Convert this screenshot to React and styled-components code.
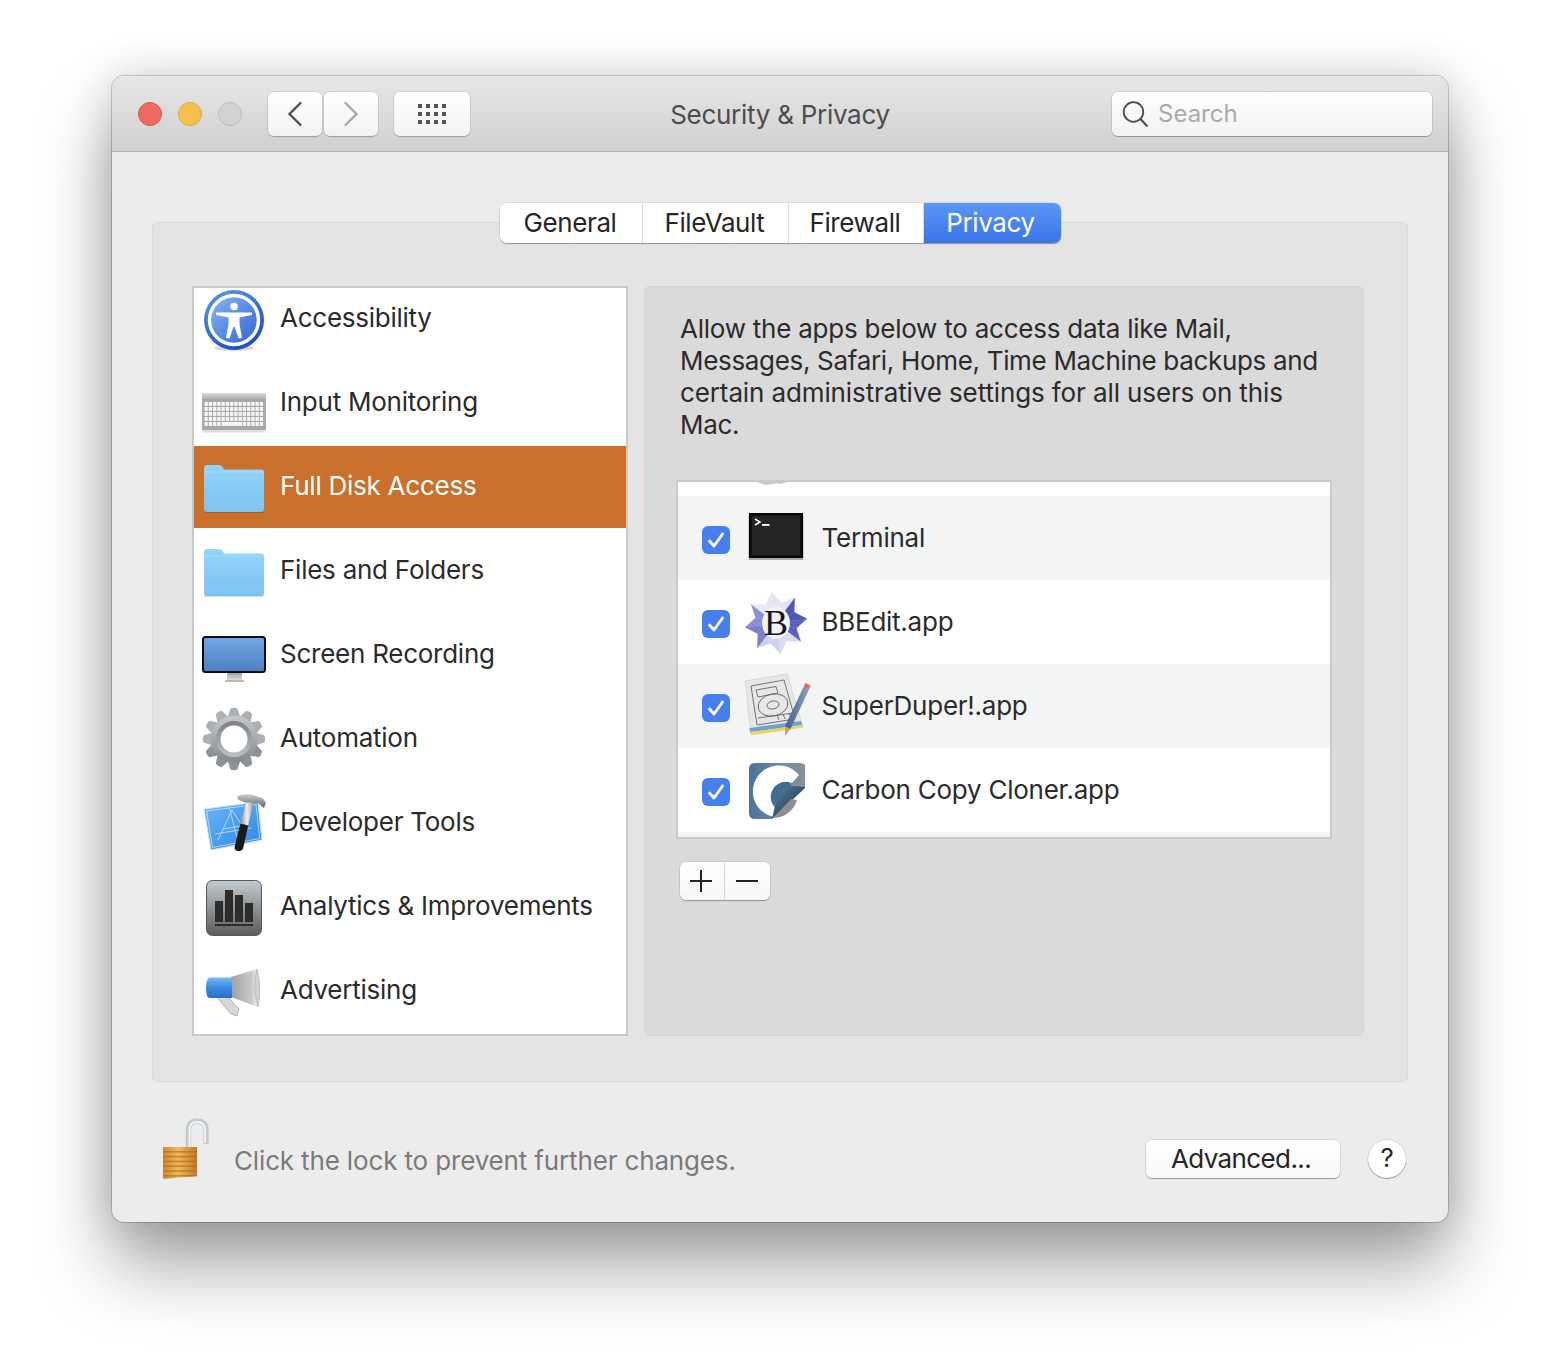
import React from "react";
import styled, { createGlobalStyle } from "styled-components";

const Global = createGlobalStyle`
  html, body {
    margin: 0;
    background: #fff;
  }
  body {
    font-family: Inter, "Open Sans", "Liberation Sans", sans-serif;
    font-size: 26px;
    letter-spacing: -0.25px;
    color: #2b2b2b;
  }
`;

function AccessibilityIcon() {
  return (
    <svg width="66" height="66" viewBox="0 0 66 66">
      <defs>
        <linearGradient id="accRing" x1="0" y1="0" x2="0.6" y2="1">
          <stop offset="0" stopColor="#5b9bea" />
          <stop offset="1" stopColor="#1f4fc4" />
        </linearGradient>
        <linearGradient id="accFill" x1="0" y1="0" x2="1" y2="1">
          <stop offset="0" stopColor="#8ab8f0" />
          <stop offset="1" stopColor="#2c63d8" />
        </linearGradient>
      </defs>
      <ellipse cx="33" cy="62" rx="20" ry="3" fill="#000" opacity="0.15" />
      <circle cx="33" cy="34" r="30" fill="url(#accRing)" />
      <circle cx="33" cy="34" r="24.5" fill="url(#accFill)" stroke="#fff" strokeWidth="3.4" />
      <circle cx="33" cy="20.5" r="3.8" fill="#fff" />
      <path
        d="M15 26.5 L51 26.5 L51 29 L38.5 31.5 L38.5 38 L41 52 L37.6 52.6 L33.6 41 L32.4 41 L28.4 52.6 L25 52 L27.5 38 L27.5 31.5 L15 29 Z"
        fill="#fff"
      />
    </svg>
  );
}

function KeyboardIcon() {
  const keys = [];
  for (let r = 0; r < 5; r++) {
    for (let c = 0; c < 14; c++) {
      if (r === 4 && c > 3 && c < 9) continue;
      keys.push(<rect key={r + "-" + c} x={3.5 + c * 4.25} y={32 + r * 5} width="3.3" height="3.9" fill="#f6f6f6" />);
    }
  }
  return (
    <svg width="66" height="66" viewBox="0 0 66 66">
      <defs>
        <linearGradient id="kbTop" x1="0" y1="0" x2="0" y2="1">
          <stop offset="0" stopColor="#dcdcdc" />
          <stop offset="1" stopColor="#a4a4a4" />
        </linearGradient>
      </defs>
      <rect x="2" y="60" width="62" height="2.5" fill="#000" opacity="0.13" />
      <rect x="1" y="23" width="64" height="37" fill="#a9a9a9" />
      <rect x="1" y="23" width="64" height="7" fill="url(#kbTop)" />
      {keys}
      <rect x="20.5" y="52" width="20.5" height="3.9" fill="#f6f6f6" />
    </svg>
  );
}

function FolderIcon({ id }) {
  return (
    <svg width="66" height="66" viewBox="0 0 66 66">
      <defs>
        <linearGradient id={id} x1="0" y1="0" x2="0" y2="1">
          <stop offset="0" stopColor="#93d4fb" />
          <stop offset="1" stopColor="#7cc3f2" />
        </linearGradient>
      </defs>
      <rect x="3.5" y="57" width="59" height="2" fill="#000" opacity="0.14" />
      <path
        d="M3 15 Q3 11 6 11 L18 11 Q20 11 21.5 13 L23 15.5 L60 15.5 Q63 15.5 63 18 L63 55 Q63 58 60 58 L6 58 Q3 58 3 55 Z"
        fill={`url(#${id})`}
      />
      <path d="M3 18 L63 18" stroke="#a9def9" strokeWidth="1" />
      <path d="M3 50 L63 50 M3 53 L63 53" stroke="#8dccf3" strokeWidth="1" />
    </svg>
  );
}

function MonitorIcon() {
  return (
    <svg width="66" height="66" viewBox="0 0 66 66">
      <defs>
        <linearGradient id="monScreen" x1="0" y1="0" x2="0" y2="1">
          <stop offset="0" stopColor="#74a7e6" />
          <stop offset="1" stopColor="#4a80c2" />
        </linearGradient>
        <linearGradient id="monStand" x1="0" y1="0" x2="0" y2="1">
          <stop offset="0" stopColor="#9a9a9a" />
          <stop offset="1" stopColor="#dcdcdc" />
        </linearGradient>
      </defs>
      <rect x="26" y="50" width="15" height="8" fill="url(#monStand)" />
      <rect x="24" y="58" width="19" height="2" fill="#bbb" />
      <rect x="2" y="15" width="62" height="35" rx="2.5" fill="url(#monScreen)" stroke="#0b0b0b" strokeWidth="2" />
    </svg>
  );
}

function GearIcon() {
  const teeth = [];
  for (let i = 0; i < 12; i++) {
    teeth.push(
      <path
        key={i}
        d="M29.5 2.5 Q33 1 36.5 2.5 L39.5 12 L26.5 12 Z"
        fill={i > 3 && i < 9 ? "#8f9297" : "#adb0b4"}
        transform={`rotate(${i * 30} 33 33)`}
      />
    );
  }
  return (
    <svg width="66" height="66" viewBox="0 0 66 66">
      <defs>
        <linearGradient id="gearBody" x1="0" y1="0" x2="0" y2="1">
          <stop offset="0" stopColor="#c6c9cc" />
          <stop offset="1" stopColor="#85898e" />
        </linearGradient>
        <linearGradient id="gearRing" x1="0" y1="0" x2="0" y2="1">
          <stop offset="0" stopColor="#7f8388" />
          <stop offset="1" stopColor="#bcbfc3" />
        </linearGradient>
      </defs>
      {teeth}
      <circle cx="33" cy="33" r="23.5" fill="url(#gearBody)" />
      <circle cx="33" cy="33" r="18" fill="url(#gearRing)" />
      <circle cx="33" cy="33" r="13.5" fill="#fff" />
    </svg>
  );
}

function XcodeIcon() {
  return (
    <svg width="66" height="66" viewBox="0 0 66 66">
      <defs>
        <linearGradient id="xcPlan" x1="0" y1="0" x2="1" y2="1">
          <stop offset="0" stopColor="#6cb6f5" />
          <stop offset="1" stopColor="#2f86e6" />
        </linearGradient>
        <linearGradient id="xcHead" x1="0" y1="0" x2="0" y2="1">
          <stop offset="0" stopColor="#d0d0d0" />
          <stop offset="1" stopColor="#5f5f5f" />
        </linearGradient>
        <linearGradient id="xcShaft" x1="0" y1="0" x2="1" y2="0">
          <stop offset="0" stopColor="#8d8d8d" />
          <stop offset="0.5" stopColor="#f0f0f0" />
          <stop offset="1" stopColor="#9a9a9a" />
        </linearGradient>
      </defs>
      <path d="M3 19 L57 12 L61 50 L10 60 Z" fill="url(#xcPlan)" stroke="#cbe6fb" strokeWidth="1" />
      <g fill="none" stroke="#b9dcf9" strokeWidth="0.9">
        <path d="M5.5 21 L55 14.5 L58.7 48.5 L11.5 57.5 Z" />
        <path d="M17 50 L31 20 L45 42 M22 39 L40 36 M14 44 L50 38 M28 17 L36 47" />
      </g>
      <rect x="6" y="55" width="2.4" height="2.4" fill="#fff" />
      <path d="M45 13 L52.5 13 L47 36 L39.5 34 Z" fill="url(#xcShaft)" />
      <path d="M39.5 33.5 L47.2 35.5 L42 59 Q39 62.5 35 60.5 Q33 59 33.6 57 Z" fill="#1a1a1a" />
      <path d="M36 6 Q44 3 52 5 L62 8.5 L65 13 L63 18 L57 13 L44 12.5 Q40 11 37 9.5 Z" fill="url(#xcHead)" />
    </svg>
  );
}

function AnalyticsIcon() {
  return (
    <svg width="66" height="66" viewBox="0 0 66 66">
      <defs>
        <linearGradient id="anBg" x1="0" y1="0" x2="0" y2="1">
          <stop offset="0" stopColor="#c3cbce" />
          <stop offset="1" stopColor="#5c5c5c" />
        </linearGradient>
      </defs>
      <rect x="5.5" y="6.5" width="55" height="55" rx="6" fill="url(#anBg)" stroke="#4d5a66" strokeWidth="1" />
      <g fill="#2c2c2c">
        <rect x="14" y="27" width="8" height="21" />
        <rect x="24" y="16" width="8" height="32" />
        <rect x="34" y="21" width="8" height="27" />
        <rect x="44" y="29" width="8" height="19" />
        <rect x="14" y="50" width="38" height="2" />
      </g>
    </svg>
  );
}

function MegaphoneIcon() {
  return (
    <svg width="66" height="66" viewBox="0 0 66 66">
      <defs>
        <linearGradient id="megBlue" x1="0" y1="0" x2="0" y2="1">
          <stop offset="0" stopColor="#7ab9f0" />
          <stop offset="0.45" stopColor="#3a8ce4" />
          <stop offset="1" stopColor="#2a6fc4" />
        </linearGradient>
        <linearGradient id="megCone" x1="0" y1="0" x2="1" y2="0">
          <stop offset="0" stopColor="#a0a0a0" />
          <stop offset="0.75" stopColor="#c8c8c8" />
          <stop offset="1" stopColor="#efefef" />
        </linearGradient>
      </defs>
      <path d="M16 39 L27 39 L38 51 L36 58 L30 56 Z" fill="#d8d8d8" stroke="#a0a0a0" strokeWidth="0.8" />
      <path d="M30 19 L56 11 L57 49 L30 39 Z" fill="url(#megCone)" />
      <path d="M56 11 Q61 30 57 49 Q51 30 56 11 Z" fill="#d2d2d2" stroke="#aaa" strokeWidth="0.6" />
      <path d="M9 19.5 L31 19.5 L31 40 L9 40 Q5 40 5 30 Q5 19.5 9 19.5 Z" fill="url(#megBlue)" />
    </svg>
  );
}

function TerminalIcon() {
  return (
    <svg width="58" height="58" viewBox="0 0 58 58">
      <rect x="1.5" y="6" width="55" height="45" fill="#000" opacity="0.3" />
      <rect x="2" y="4" width="54" height="45" fill="#050505" />
      <rect x="4.5" y="6.5" width="49" height="40" fill="#242424" />
      <path d="M8 10 L13 13 L8 16" fill="none" stroke="#fff" strokeWidth="1.5" />
      <rect x="15" y="15" width="7.5" height="1.8" fill="#fff" />
    </svg>
  );
}

// eight pointed star, split into facets so the two tones alternate round it
const starPoint = (i) => {
  const radius = i % 2 === 0 ? 31 : 21;
  const angle = ((-98 + i * 22.5) * Math.PI) / 180;
  return [29 + radius * Math.cos(angle), 30 + radius * Math.sin(angle)];
};

const facetColors = ["#e4e4f2", "#4f56b6", "#5a60bc", "#dcdcee", "#cfd1ea", "#7b80c8", "#8a8fd0", "#e8e8f4"];

function BBEditIcon() {
  const facets = [];
  for (let i = 0; i < 16; i++) {
    const a = starPoint(i);
    const b = starPoint((i + 1) % 16);
    facets.push(
      <polygon
        key={i}
        points={`29,30 ${a[0]},${a[1]} ${b[0]},${b[1]}`}
        fill={facetColors[Math.floor(i / 2) % 8]}
        stroke={facetColors[Math.floor(i / 2) % 8]}
        strokeWidth="0.4"
      />
    );
  }
  return (
    <svg width="58" height="58" viewBox="0 0 58 58" style={{ overflow: "visible" }}>
      {facets}
      <ellipse cx="29" cy="30" rx="14" ry="16" fill="#f1f1f8" />
      <text x="29" y="42" textAnchor="middle" fontFamily="Liberation Serif, serif" fontSize="36" fill="#161616">
        B
      </text>
    </svg>
  );
}

function SuperDuperIcon() {
  return (
    <svg width="58" height="58" viewBox="0 0 58 58" style={{ overflow: "visible" }}>
      <defs>
        <linearGradient id="sdPencil" x1="0" y1="0" x2="1" y2="0">
          <stop offset="0" stopColor="#3f5f88" />
          <stop offset="1" stopColor="#8aa2c0" />
        </linearGradient>
      </defs>
      <path d="M-2 4 L40 -3 L56 50 L4 58 Z" fill="#e6e7e9" stroke="#c9cacc" strokeWidth="0.6" />
      <path d="M2.5 51 L54 44 L55.5 48 L3 55 Z" fill="#6da2d6" />
      <path d="M3 55 L55.5 48 L56 50.5 L4 58 Z" fill="#e6d94e" />
      <g fill="none" stroke="#666" strokeWidth="0.9">
        <path d="M4 9 L37 3 L48 42 L10 48 Z" />
        <path d="M9 13 L29 9.5 L31 16 L11 20 Z" />
        <ellipse cx="26" cy="28" rx="15" ry="11" transform="rotate(-12 26 28)" />
        <ellipse cx="26" cy="28" rx="6" ry="4" transform="rotate(-12 26 28)" />
        <path d="M11 41 L46 36 M30 38 L32 43 M36 37 L38 42 M42 36 L44 41" />
      </g>
      <path d="M56.5 10 L62 12.5 L43.5 52 L38 49.5 Z" fill="url(#sdPencil)" />
      <path d="M38 49.5 L43.5 52 L38 59 Z" fill="#caa27a" />
      <path d="M56.5 10 L62 12.5 L63.5 8.5 L58.5 6 Z" fill="#d86a6a" />
    </svg>
  );
}

function CarbonCopyIcon() {
  return (
    <svg width="58" height="58" viewBox="0 0 58 58">
      <defs>
        <linearGradient id="cccBg" x1="0" y1="0" x2="1" y2="0">
          <stop offset="0" stopColor="#4a7499" />
          <stop offset="0.6" stopColor="#6d8ea6" />
          <stop offset="1" stopColor="#8c8f92" />
        </linearGradient>
        <linearGradient id="cccCurl" x1="0" y1="0" x2="1" y2="1">
          <stop offset="0" stopColor="#5d87a6" />
          <stop offset="1" stopColor="#0d2234" />
        </linearGradient>
      </defs>
      <path d="M2 8 Q2 2 8 2 L53 2 Q59 2 59 8 L59 25 L25 58 L8 58 Q2 58 2 52 Z" fill="url(#cccBg)" />
      <circle cx="31" cy="30" r="14" fill="#3f6c90" />
      <path d="M52 14 A26 26 0 1 0 27 56 L33 50 A14 14 0 1 1 45 22 Z" fill="#fff" />
      <path d="M59 26 L25 58 L30 36 Q35 24 48 25 Z" fill="url(#cccCurl)" />
      <path d="M50 39 A25 25 0 0 1 27 57 L25 58 L44 38 Z" fill="#8e8f90" />
    </svg>
  );
}

function LockIcon() {
  const bands = [];
  for (let i = 0; i < 6; i++) {
    bands.push(<rect key={i} x="0" y={33 + i * 4.8} width="34" height="1.6" fill="#a9691c" opacity="0.6" />);
  }
  return (
    <svg width="48" height="62" viewBox="0 0 48 62">
      <defs>
        <linearGradient id="lockGold" x1="0" y1="0" x2="1" y2="0">
          <stop offset="0" stopColor="#d0872c" />
          <stop offset="0.45" stopColor="#f0b85c" />
          <stop offset="1" stopColor="#c07a22" />
        </linearGradient>
      </defs>
      <path d="M25.5 30 L25.5 12 Q25.5 3 34 3 Q43 3 43 12 L43 26" fill="none" stroke="#c3cad0" strokeWidth="5.4" />
      <path d="M26.5 30 L26.5 12 Q26.5 4 34 4 Q42 4 42 12 L42 25" fill="none" stroke="#f4f6f7" strokeWidth="1.8" />
      <path d="M0 29 L34 29 L34 58 L0 61 Z" fill="url(#lockGold)" />
      {bands}
    </svg>
  );
}

const sidebarItems = [
  { label: "Accessibility", icon: <AccessibilityIcon /> },
  { label: "Input Monitoring", icon: <KeyboardIcon /> },
  { label: "Full Disk Access", icon: <FolderIcon id="folderA" />, selected: true },
  { label: "Files and Folders", icon: <FolderIcon id="folderB" /> },
  { label: "Screen Recording", icon: <MonitorIcon /> },
  { label: "Automation", icon: <GearIcon /> },
  { label: "Developer Tools", icon: <XcodeIcon /> },
  { label: "Analytics & Improvements", icon: <AnalyticsIcon /> },
  { label: "Advertising", icon: <MegaphoneIcon /> },
];

const apps = [
  { label: "Terminal", icon: <TerminalIcon />, alt: true },
  { label: "BBEdit.app", icon: <BBEditIcon /> },
  { label: "SuperDuper!.app", icon: <SuperDuperIcon />, alt: true },
  { label: "Carbon Copy Cloner.app", icon: <CarbonCopyIcon /> },
];

const tabs = [
  { label: "General", width: 143 },
  { label: "FileVault", width: 146 },
  { label: "Firewall", width: 135 },
  { label: "Privacy", width: 137, active: true },
];

const descriptionLines = [
  { text: "Allow the apps below to access data like Mail,", spacing: -0.235 },
  { text: "Messages, Safari, Home, Time Machine backups and", spacing: -0.32 },
  { text: "certain administrative settings for all users on this", spacing: -0.115 },
  { text: "Mac.", spacing: -0.3 },
];

export default function App() {
  return (
    <Page>
      <Global />
      <Window>
        <TitleBar>
          <TitleLeft>
            <Lights>
              <Light $bg="#ee6a5f" $line="#d9564b" />
              <Light $bg="#f6c04f" $line="#dfa83c" />
              <Light $bg="#d2d2d2" $line="#bdbdbd" />
            </Lights>
            <NavGroup>
              <ToolButton $w={54}>
                <svg width="18" height="26" viewBox="0 0 18 26">
                  <path d="M14.5 2 L3.5 13 L14.5 24" fill="none" stroke="#4f4f4f" strokeWidth="2.4" strokeLinecap="round" />
                </svg>
              </ToolButton>
              <ToolButton $w={54}>
                <svg width="18" height="26" viewBox="0 0 18 26">
                  <path d="M3.5 2 L14.5 13 L3.5 24" fill="none" stroke="#a8a8a8" strokeWidth="2.4" strokeLinecap="round" />
                </svg>
              </ToolButton>
            </NavGroup>
            <ToolButton $w={76}>
              <svg width="28" height="20" viewBox="0 0 28 20" fill="#555">
                {[0, 8, 16].map((y) =>
                  [0, 8, 16, 24].map((x) => <rect key={x + "-" + y} x={x} y={y} width="4" height="4" />)
                )}
              </svg>
            </ToolButton>
          </TitleLeft>
          <Title>Security &amp; Privacy</Title>
          <SearchField>
            <svg width="28" height="30" viewBox="0 0 28 30">
              <circle cx="11.5" cy="13" r="9.8" fill="none" stroke="#4a4a4a" strokeWidth="1.8" />
              <path d="M18.5 20 L25.5 27.5" stroke="#4a4a4a" strokeWidth="2" />
            </svg>
            <SearchText>Search</SearchText>
          </SearchField>
        </TitleBar>

        <Body>
          <TabBox>
            <TabRow>
              <Tabs>
                {tabs.map((t) => (
                  <Tab key={t.label} $w={t.width} $active={t.active}>
                    {t.label}
                  </Tab>
                ))}
              </Tabs>
            </TabRow>
            <Columns>
              <Sidebar>
                <SidebarScroll>
                  {sidebarItems.map((item) => (
                    <SidebarRow key={item.label} $selected={item.selected}>
                      <IconSlot>{item.icon}</IconSlot>
                      <SidebarLabel>{item.label}</SidebarLabel>
                    </SidebarRow>
                  ))}
                </SidebarScroll>
              </Sidebar>
              <Panel>
                <Description>
                  {descriptionLines.map((line) => (
                    <DescriptionLine key={line.text} $spacing={line.spacing}>
                      {line.text}
                    </DescriptionLine>
                  ))}
                </Description>
                <AppList>
                  <ClippedRow>
                    <svg width="30" height="3" viewBox="0 0 30 3">
                      <path d="M0 0 L30 0 L24 2 L20 1.5 L8 3 Z" fill="#c9c9c9" />
                    </svg>
                  </ClippedRow>
                  {apps.map((app) => (
                    <AppRow key={app.label} $alt={app.alt}>
                      <Checkbox>
                        <svg width="20" height="18" viewBox="0 0 20 18">
                          <path d="M3.5 10 L8 15 L16.5 3" fill="none" stroke="#fff" strokeWidth="2.8" strokeLinecap="round" strokeLinejoin="round" />
                        </svg>
                      </Checkbox>
                      <AppIcon>{app.icon}</AppIcon>
                      <AppLabel>{app.label}</AppLabel>
                    </AppRow>
                  ))}
                  <ListTail />
                </AppList>
                <PlusMinus>
                  <PlusMinusCell $w={44}>
                    <svg width="24" height="24" viewBox="0 0 24 24">
                      <path d="M1 12 L23 12 M12 1 L12 23" stroke="#222" strokeWidth="2" />
                    </svg>
                  </PlusMinusCell>
                  <PlusMinusCell $w={46}>
                    <svg width="24" height="24" viewBox="0 0 24 24">
                      <path d="M1 12 L23 12" stroke="#222" strokeWidth="2" />
                    </svg>
                  </PlusMinusCell>
                </PlusMinus>
              </Panel>
            </Columns>
          </TabBox>

          <Footer>
            <LockSlot>
              <LockIcon />
            </LockSlot>
            <LockNote>Click the lock to prevent further changes.</LockNote>
            <AdvancedButton>Advanced...</AdvancedButton>
            <HelpButton>?</HelpButton>
          </Footer>
        </Body>
      </Window>
    </Page>
  );
}

const Page = styled.div`
  width: 1560px;
  height: 1370px;
  padding: 76px 112px 0;
  box-sizing: border-box;
  overflow: hidden;
`;

const Window = styled.div`
  width: 1336px;
  height: 1146px;
  box-sizing: border-box;
  border-radius: 12px;
  background: #ececec;
  box-shadow: 0 0 0 1px rgba(0, 0, 0, 0.18), 0 44px 72px rgba(0, 0, 0, 0.36), 0 0 44px rgba(0, 0, 0, 0.16);
  overflow: hidden;
`;

const TitleBar = styled.div`
  display: grid;
  grid-template-columns: 1fr auto 1fr;
  align-items: center;
  height: 76px;
  box-sizing: border-box;
  padding: 0 16px;
  background: linear-gradient(#e7e7e7, #d0d0d0);
  border-bottom: 1px solid #b4b4b4;
`;

const TitleLeft = styled.div`
  display: flex;
  align-items: center;
  margin-left: 10px;
`;

const Lights = styled.div`
  display: flex;
  gap: 16px;
  margin-right: 26px;
`;

const Light = styled.span`
  width: 24px;
  height: 24px;
  box-sizing: border-box;
  border-radius: 50%;
  background: ${(p) => p.$bg};
  border: 1px solid ${(p) => p.$line};
`;

const NavGroup = styled.div`
  display: flex;
  gap: 2px;
  margin-right: 16px;
`;

const ToolButton = styled.div`
  display: flex;
  align-items: center;
  justify-content: center;
  width: ${(p) => p.$w}px;
  height: 44px;
  border-radius: 6px;
  background: linear-gradient(#fefefe, #f2f2f2);
  box-shadow: 0 0 0 0.5px rgba(0, 0, 0, 0.14), 0 1px 1px rgba(0, 0, 0, 0.22);
`;

const Title = styled.div`
  padding-top: 2px;
  color: #4d4d4d;
  font-size: 26px;
  letter-spacing: -0.28px;
  white-space: nowrap;
`;

const SearchField = styled.div`
  display: flex;
  align-items: center;
  justify-self: end;
  width: 320px;
  height: 44px;
  box-sizing: border-box;
  padding-left: 10px;
  border-radius: 6px;
  background: linear-gradient(#fefefe, #f2f2f2);
  box-shadow: 0 0 0 0.5px rgba(0, 0, 0, 0.14), 0 1px 1px rgba(0, 0, 0, 0.25);
`;

const SearchText = styled.span`
  margin-left: 8px;
  color: #ababab;
  font-size: 24px;
  letter-spacing: 0;
`;

const Body = styled.div`
  padding: 70px 40px 0;
`;

const TabBox = styled.div`
  height: 860px;
  box-sizing: border-box;
  padding: 0 43px 0 39px;
  background: #e4e4e4;
  border: 1px solid #dadada;
  border-radius: 6px;
`;

const TabRow = styled.div`
  display: flex;
  justify-content: center;
  margin-top: -20px;
  margin-bottom: 43px;
  padding-left: 4px;
`;

const Tabs = styled.div`
  display: flex;
  height: 40px;
  border-radius: 7px;
  background: #fff;
  box-shadow: 0 0 0 0.5px rgba(0, 0, 0, 0.16), 0 1px 1px rgba(0, 0, 0, 0.3);
  overflow: hidden;
`;

const Tab = styled.div`
  display: flex;
  align-items: center;
  justify-content: center;
  box-sizing: border-box;
  width: ${(p) => p.$w}px;
  padding: 0 ${(p) => (p.$active ? "3px" : "1px")} 2px 0;
  letter-spacing: -0.4px;
  color: ${(p) => (p.$active ? "#fff" : "#262626")};
  background: ${(p) => (p.$active ? "linear-gradient(#5a97f6, #3a74ea)" : "#fff")};
  border-right: ${(p) => (p.$active ? "none" : "1px solid #dcdcdc")};
`;

const Columns = styled.div`
  display: flex;
  gap: 16px;
  height: 750px;
`;

const Sidebar = styled.div`
  width: 436px;
  box-sizing: border-box;
  background: #fff;
  border: 2px solid #c9c9c9;
  overflow: hidden;
`;

const SidebarScroll = styled.div`
  margin-top: -10px;
`;

const SidebarRow = styled.div`
  display: flex;
  align-items: center;
  height: 82px;
  margin-bottom: 2px;
  color: ${(p) => (p.$selected ? "#fff" : "#2b2b2b")};
  background: ${(p) => (p.$selected ? "#c8702c" : "transparent")};
`;

const SidebarLabel = styled.span`
  padding-bottom: 4px;
`;

const IconSlot = styled.div`
  flex: none;
  display: flex;
  width: 66px;
  height: 66px;
  margin: 0 13px 0 7px;
`;

const Panel = styled.div`
  width: 720px;
  box-sizing: border-box;
  padding: 26px 32px 0 31px;
  background: #dadada;
  border: 1px solid #d3d3d3;
  border-radius: 6px;
`;

const Description = styled.div`
  margin-left: 4px;
  line-height: 32px;
  white-space: nowrap;
`;

const DescriptionLine = styled.div`
  letter-spacing: ${(p) => p.$spacing}px;
`;

const AppList = styled.div`
  width: 656px;
  height: 359px;
  box-sizing: border-box;
  margin-top: 39px;
  background: #fff;
  border: 2px solid #c9c9c9;
  overflow: hidden;
`;

const ClippedRow = styled.div`
  display: flex;
  height: 14px;
  padding-left: 79px;
`;

const AppRow = styled.div`
  display: flex;
  align-items: center;
  height: 84px;
  background: ${(p) => (p.$alt ? "#f3f5f4" : "#fff")};
`;

const AppLabel = styled.span`
  padding-bottom: 2px;
`;

const Checkbox = styled.div`
  flex: none;
  display: flex;
  align-items: center;
  justify-content: center;
  width: 28px;
  height: 28px;
  margin: 4px 0 0 24px;
  border-radius: 6px;
  background: #4680ee;
`;

const AppIcon = styled.div`
  flex: none;
  display: flex;
  width: 58px;
  height: 58px;
  margin: 0 16.5px 0 17px;
`;

const ListTail = styled.div`
  height: 5px;
  background: #f3f5f4;
`;

const PlusMinus = styled.div`
  display: flex;
  width: 90px;
  height: 38px;
  margin: 23px 0 0 4px;
  border-radius: 6px;
  background: linear-gradient(#fefefe, #f6f6f6);
  box-shadow: 0 0 0 0.5px rgba(0, 0, 0, 0.14), 0 1px 1px rgba(0, 0, 0, 0.28);
`;

const PlusMinusCell = styled.div`
  display: flex;
  align-items: center;
  justify-content: center;
  box-sizing: border-box;
  width: ${(p) => p.$w}px;
  padding-right: 2px;
  & + & {
    border-left: 1px solid #d8d8d8;
  }
`;

const Footer = styled.div`
  display: flex;
  align-items: center;
  height: 82px;
  margin-top: 36px;
  padding-right: 2px;
`;

const LockSlot = styled.div`
  flex: none;
  display: flex;
  align-self: flex-start;
  margin-left: 11px;
`;

const LockNote = styled.div`
  flex: 1;
  margin: 2px 0 0 23px;
  color: #7a7a7a;
  letter-spacing: -0.15px;
`;

const AdvancedButton = styled.div`
  display: flex;
  align-items: center;
  justify-content: center;
  width: 194px;
  height: 38px;
  margin-right: 28px;
  padding: 0 4px 2px 0;
  box-sizing: border-box;
  border-radius: 6px;
  letter-spacing: -0.6px;
  color: #262626;
  background: linear-gradient(#fff, #f8f8f8);
  box-shadow: 0 0 0 0.5px rgba(0, 0, 0, 0.16), 0 1px 1px rgba(0, 0, 0, 0.3);
`;

const HelpButton = styled.div`
  display: flex;
  align-items: center;
  justify-content: center;
  width: 38px;
  height: 38px;
  padding-bottom: 4px;
  box-sizing: border-box;
  border-radius: 50%;
  color: #262626;
  background: #fff;
  box-shadow: 0 0 0 0.5px rgba(0, 0, 0, 0.16), 0 1px 1px rgba(0, 0, 0, 0.3);
`;
